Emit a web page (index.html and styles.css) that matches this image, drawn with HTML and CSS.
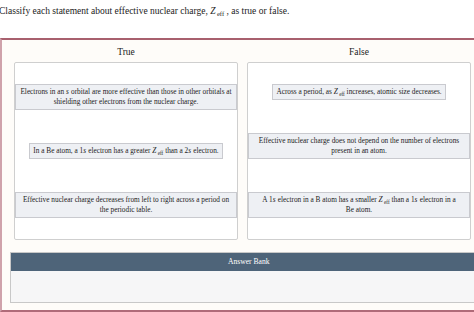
FILE: index.html
```html
<!DOCTYPE html>
<html lang="en">
<head>
    <meta charset="UTF-8">
    <title>Classify Zeff statements</title>
    <link rel="stylesheet" href="styles.css">
</head>
<body>
    <p class="prompt">Classify each statement about effective nuclear charge, <i>Z</i><sub>eff</sub> , as true or false.</p>

    <div class="frame">
        <div class="columns">
            <div class="column">
                <div class="column-title">True</div>
                <div class="drop-zone">
                    <div class="card">Electrons in an <i>s</i> orbital are more effective than those in other orbitals at shielding other electrons from the nuclear charge.</div>
                    <div class="card">In a Be atom, a 1<i>s</i> electron has a greater <i>Z</i><sub>eff</sub> than a 2<i>s</i> electron.</div>
                    <div class="card">Effective nuclear charge decreases from left to right across a period on the periodic table.</div>
                </div>
            </div>
            <div class="column">
                <div class="column-title">False</div>
                <div class="drop-zone">
                    <div class="card">Across a period, as <i>Z</i><sub>eff</sub> increases, atomic size decreases.</div>
                    <div class="card">Effective nuclear charge does not depend on the number of electrons present in an atom.</div>
                    <div class="card">A 1<i>s</i> electron in a B atom has a smaller <i>Z</i><sub>eff</sub> than a 1<i>s</i> electron in a Be&nbsp;atom.</div>
                </div>
            </div>
        </div>

        <div class="bank">
            <div class="bank-header">Answer Bank</div>
            <div class="bank-body"></div>
        </div>
    </div>
</body>
</html>
```

FILE: styles.css
```css
body {
    margin: 0;
    font-family: "Liberation Serif", "Times New Roman", serif;
    color: #222;
    background: #fff;
    overflow: hidden;
    width: 474px;
    height: 312px;
}
.prompt {
    margin: 0 0 0 -1px;
    height: 38px;
    padding-top: 5px;
    box-sizing: border-box;
    font-size: 9.5px;
    line-height: 12px;
}
i {
    padding-right: 0.4px;
}
sub {
    font-size: 0.7em;
    vertical-align: -0.3em;
    line-height: 0;
    margin-left: 1px;
}
.frame {
    width: 484px;
    height: 274px;
    box-sizing: border-box;
    border-top: 2px solid #a8606e;
    border-left: 2px solid #cfa2ab;
    border-bottom: 2px solid #b06b79;
    background: #fefcf9;
    padding: 0 0 0 8px;
}
.columns {
    display: flex;
    gap: 9px;
    padding-left: 4px;
}
.column {
    width: 224px;
}
.column-title {
    text-align: center;
    font-size: 9.5px;
    height: 22px;
    line-height: 24px;
}
.drop-zone {
    height: 178px;
    box-sizing: border-box;
    border: 1px solid #cfcfcf;
    border-radius: 2px;
    background: #fff;
    padding: 21px 0 21px;
    display: flex;
    flex-direction: column;
    align-items: center;
    justify-content: space-between;
}
.card {
    max-width: 100%;
    box-sizing: border-box;
    background: #eef0f4;
    border: 1px solid #c9cacf;
    padding: 2px 3px;
    font-size: 7.3px;
    line-height: 10px;
    text-align: center;
    color: #1d1d1d;
}
.bank {
    margin-top: 12px;
    border: 1px solid #c8c8c8;
    background: #f6f6f7;
}
.bank-header {
    height: 18px;
    line-height: 18px;
    background: #4e6479;
    color: #fff;
    font-size: 7.6px;
    padding-left: 217px;
}
.bank-body {
    height: 31px;
}
```
